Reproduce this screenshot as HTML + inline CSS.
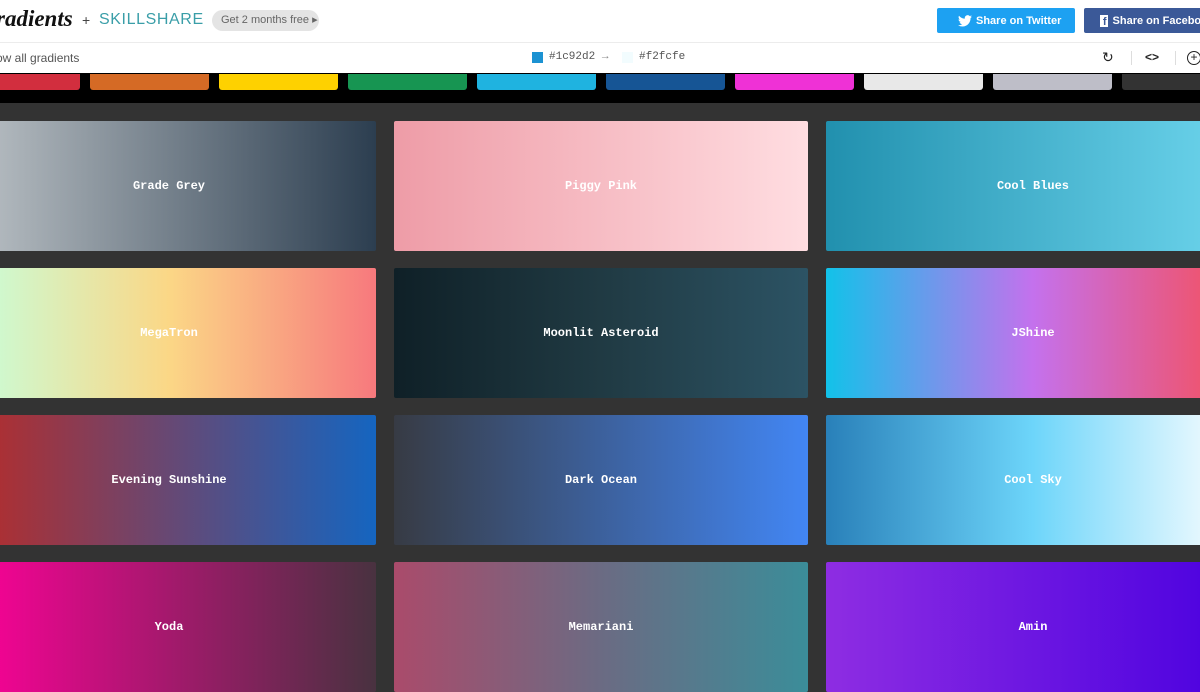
<!DOCTYPE html>
<html><head><style>
*{margin:0;padding:0;box-sizing:border-box}
body{width:1200px;height:630px;overflow:hidden;background:#333;font-family:"Liberation Sans",sans-serif;position:relative}
.hdr{position:absolute;left:0;top:0;width:1200px;height:42px;background:#fff}
.line{position:absolute;left:0;top:42px;width:1200px;height:1px;background:#ececec}
.bar{position:absolute;left:0;top:43px;width:1200px;height:30px;background:#fff}
.band{position:absolute;left:0;top:73px;width:1200px;height:30px;background:#000}
.sw{position:absolute;top:74px;height:16px;width:119px;border-radius:0 0 3px 3px}
.card{position:absolute;width:414px;height:130px;border-radius:2px;color:#fff;font-family:"Liberation Mono",monospace;font-size:12px;font-weight:bold;display:flex;align-items:center;justify-content:center;padding-top:0}
.btn{position:absolute;top:8px;height:25px;color:#fff;font-size:11px;font-weight:bold;display:flex;align-items:center;border-radius:2px;white-space:nowrap}
</style></head><body>
<div class="hdr">
<div style="position:absolute;left:-4px;top:6px;font-family:'Liberation Serif',serif;font-style:italic;font-weight:bold;font-size:23px;color:#111">radients</div>
<div style="position:absolute;left:82px;top:12px;font-size:14px;color:#444">+</div>
<div style="position:absolute;left:99px;top:11px;font-size:16px;letter-spacing:0.6px;color:#3a9ea8">SKILLSHARE</div>
<div style="position:absolute;left:212px;top:10px;width:107px;height:21px;border-radius:11px;background:#e4e4e4;color:#666;font-size:11px;line-height:21px;padding-left:9px">Get 2 months free ▸</div>
<div class="btn" style="left:937px;width:138px;background:#1da1f2;padding-left:21px"><svg width="14" height="12" viewBox="0 0 24 20" style="margin-right:4px"><path fill="#fff" d="M24 2.4a10 10 0 0 1-2.8.8A5 5 0 0 0 23.3.4a10 10 0 0 1-3.1 1.2A4.9 4.9 0 0 0 11.8 6 14 14 0 0 1 1.7.9a4.9 4.9 0 0 0 1.5 6.6A4.9 4.9 0 0 1 1 6.9 4.9 4.9 0 0 0 4.9 11.8a5 5 0 0 1-2.2.1 4.9 4.9 0 0 0 4.6 3.4A9.9 9.9 0 0 1 0 17.3 14 14 0 0 0 7.5 19.5c9 0 14-7.5 14-14v-.6A10 10 0 0 0 24 2.4z"/></svg>Share on Twitter</div>
<div class="btn" style="left:1084px;width:130px;background:#3b5998;padding-left:16px"><span style="display:inline-block;width:12px;height:12px;background:#fff;color:#3b5998;font-size:11px;line-height:14px;text-align:right;padding-right:1px;margin-right:5px">f</span>Share on Facebook</div>
</div>
<div class="line"></div>
<div class="bar">
<div style="position:absolute;left:-4px;top:8px;font-size:12px;color:#555">ow all gradients</div>
<div style="position:absolute;left:532px;top:9px;width:11px;height:11px;background:#1c92d2"></div>
<div style="position:absolute;left:549px;top:8px;font-family:'Liberation Mono',monospace;font-size:11px;color:#555">#1c92d2 <span style="color:#888">→</span></div>
<div style="position:absolute;left:622px;top:9px;width:11px;height:11px;background:#f2fcfe"></div>
<div style="position:absolute;left:639px;top:8px;font-family:'Liberation Mono',monospace;font-size:11px;color:#555">#f2fcfe</div>
<div style="position:absolute;left:1102px;top:6px;font-size:14px;color:#222">↻</div>
<div style="position:absolute;left:1131px;top:8px;width:1px;height:14px;background:#ddd"></div>
<div style="position:absolute;left:1145px;top:7px;font-size:12px;font-weight:bold;color:#222">&lt;&gt;</div>
<div style="position:absolute;left:1175px;top:8px;width:1px;height:14px;background:#ddd"></div>
<div style="position:absolute;left:1187px;top:8px;width:14px;height:14px;border:1.5px solid #222;border-radius:50%;font-size:12px;line-height:11px;text-align:center;color:#222">+</div>
</div>
<div class="band"></div>
<div class="sw" style="left:-39px;background:#d22e3e"></div>
<div class="sw" style="left:90px;background:#d56a25"></div>
<div class="sw" style="left:219px;background:#fed100"></div>
<div class="sw" style="left:348px;background:#179552"></div>
<div class="sw" style="left:477px;background:#1fb3e0"></div>
<div class="sw" style="left:606px;background:#165595"></div>
<div class="sw" style="left:735px;background:#ef31d6"></div>
<div class="sw" style="left:864px;background:#e8e8e8"></div>
<div class="sw" style="left:993px;background:#bebec8"></div>
<div class="sw" style="left:1122px;background:#333"></div>

<div class="card" style="left:-38px;top:121px;background:linear-gradient(to right,#bdc3c7,#2c3e50)">Grade Grey</div>
<div class="card" style="left:394px;top:121px;background:linear-gradient(to right,#ee9ca7,#ffdde1)">Piggy Pink</div>
<div class="card" style="left:826px;top:121px;background:linear-gradient(to right,#2190ae,#6dd5ed)">Cool Blues</div>
<div class="card" style="left:-38px;top:268px;background:linear-gradient(to right,#c6ffdd,#fbd786,#f7797d)">MegaTron</div>
<div class="card" style="left:394px;top:268px;background:linear-gradient(to right,#0f2027,#203a43,#2c5364)">Moonlit Asteroid</div>
<div class="card" style="left:826px;top:268px;background:linear-gradient(to right,#12c2e9,#c471ed,#f64f59)">JShine</div>
<div class="card" style="left:-38px;top:415px;background:linear-gradient(to right,#b92b27,#1565c0)">Evening Sunshine</div>
<div class="card" style="left:394px;top:415px;background:linear-gradient(to right,#373b44,#4286f4)">Dark Ocean</div>
<div class="card" style="left:826px;top:415px;background:linear-gradient(to right,#2980b9,#6dd5fa,#ffffff)">Cool Sky</div>
<div class="card" style="left:-38px;top:562px;background:linear-gradient(to right,#ff0099,#493240)">Yoda</div>
<div class="card" style="left:394px;top:562px;background:linear-gradient(to right,#aa4b6b,#6b6b83,#3b8d99)">Memariani</div>
<div class="card" style="left:826px;top:562px;background:linear-gradient(to right,#8e2de2,#4a00e0)">Amin</div>
</body></html>
